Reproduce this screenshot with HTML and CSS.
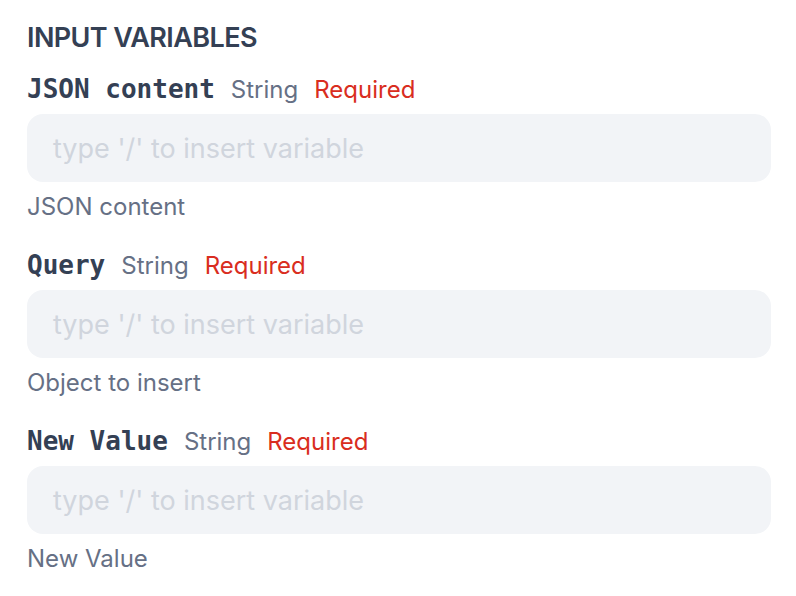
FILE: index.html
```html
<!DOCTYPE html>
<html lang="en">
<head>
<meta charset="utf-8">
<title>Input Variables</title>
<link rel="stylesheet" href="styles.css">
</head>
<body>
<div class="panel">
  <h2 class="title">INPUT VARIABLES</h2>
  <div class="fields">
    <div class="field">
      <div class="label-row">
        <span class="name">JSON content</span>
        <span class="type">String</span>
        <span class="req">Required</span>
      </div>
      <div class="input"><span class="ph">type '/' to insert variable</span></div>
      <div class="desc">JSON content</div>
    </div>
    <div class="field">
      <div class="label-row">
        <span class="name">Query</span>
        <span class="type">String</span>
        <span class="req">Required</span>
      </div>
      <div class="input"><span class="ph">type '/' to insert variable</span></div>
      <div class="desc">Object to insert</div>
    </div>
    <div class="field">
      <div class="label-row">
        <span class="name">New Value</span>
        <span class="type">String</span>
        <span class="req">Required</span>
      </div>
      <div class="input"><span class="ph">type '/' to insert variable</span></div>
      <div class="desc">New Value</div>
    </div>
  </div>
</div>
</body>
</html>
```
FILE: styles.css
```css
* { box-sizing: border-box; }
html, body { margin: 0; padding: 0; background: #ffffff; }
body { font-family: Inter, "Noto Sans", sans-serif; }
.panel { padding: 20px 25px 0 27px; }
.title {
  margin: 0;
  font-size: 27px;
  line-height: 36px;
  font-weight: 600;
  letter-spacing: -0.6px;
  color: #344054;
}
.fields { display: flex; flex-direction: column; gap: 24px; margin-top: 16px; }
.field { display: flex; flex-direction: column; }
.label-row { display: flex; align-items: center; gap: 16px; height: 34px; }
.name {
  font-family: "DejaVu Sans Mono", "Liberation Mono", monospace;
  font-weight: 700;
  font-size: 26px;
  color: #344054;
}
.type { font-size: 24px; color: #667085; }
.req { font-size: 24px; color: #d92d20; }
.input {
  margin-top: 8px;
  height: 68px;
  border-radius: 16px;
  background: #f2f4f7;
  display: flex;
  align-items: center;
  padding-left: 26px;
}
.ph { font-size: 27px; color: #d0d5dd; }
.desc { margin-top: 8px; height: 34px; line-height: 34px; font-size: 24px; color: #667085; }
```
